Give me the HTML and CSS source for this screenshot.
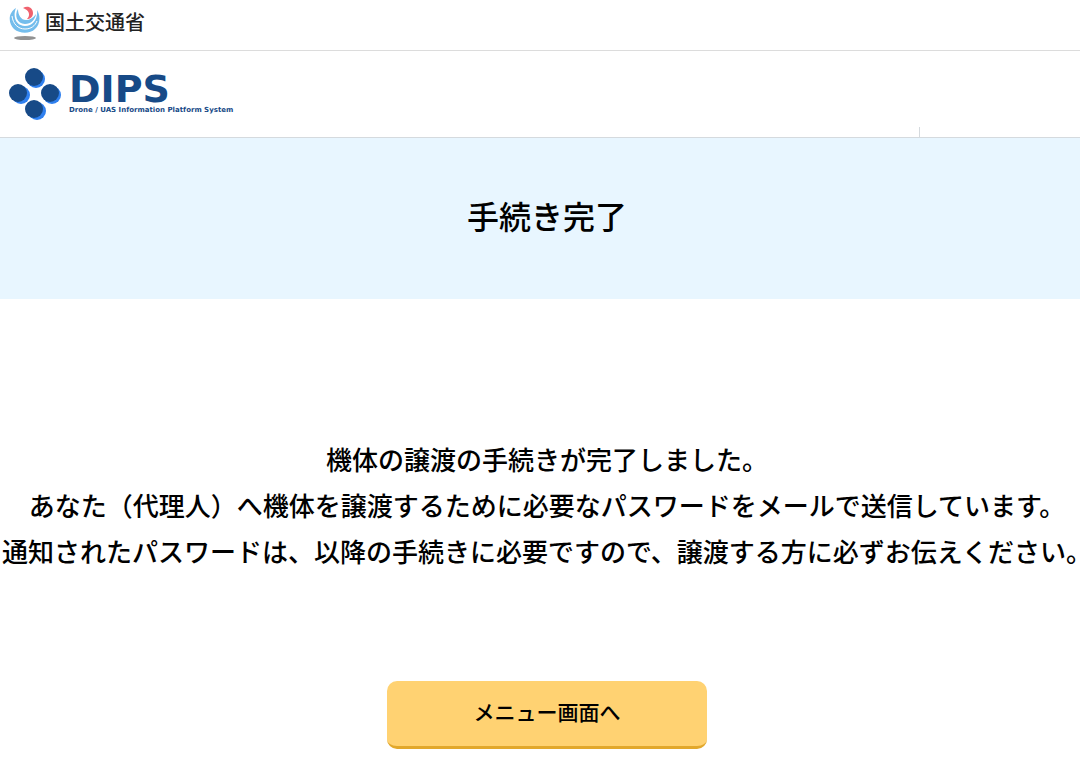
FILE: index.html
```
<!DOCTYPE html>
<html lang="ja">
<head>
<meta charset="UTF-8">
<meta name="viewport" content="width=device-width, initial-scale=1.0">
<title>手続き完了</title>
<link rel="stylesheet" href="styles.css">
</head>
<body>

<div class="ministry">
    <svg class="ministry-mark" viewBox="0 0 32 36" aria-hidden="true">
        <path fill="#74bdec" d="M7 4C-1 9-1 19 5 25c6 5 16 5 21 0 5-4 6-13 2-19 1 9-4 16-12 16C8 22 3 14 7 4z"/>
        <path fill="#74bdec" d="M9 5C5 11 8 20 16 20c6 0 10-4 11-10-3 4-6 6-10 6-5 0-8-5-8-11z"/>
        <path fill="none" stroke="#fff" stroke-width="1" d="M3 12c1 8 6 13 13 13 6 0 10-3 12-8"/>
        <path fill="#f0626e" d="M14 4c5-3 10 0 10 5 0 4-3 6-6 6 4-4 2-9-4-11z"/>
        <ellipse cx="16" cy="34" rx="11" ry="2" fill="#929292"/>
    </svg>
    <span class="ministry-name">国土交通省</span>
</div>

<header class="header">
    <div class="logo">
        <svg class="logo-mark" viewBox="0 0 52 52" aria-hidden="true">
            <g fill="#2f80ef">
                <circle cx="27" cy="11" r="9"/>
                <circle cx="12" cy="27" r="9"/>
                <circle cx="43" cy="27" r="9"/>
                <circle cx="28" cy="43" r="9"/>
            </g>
            <g fill="#174a87">
                <circle cx="25" cy="9" r="9"/>
                <circle cx="9" cy="25" r="9"/>
                <circle cx="41" cy="25" r="9"/>
                <circle cx="25" cy="41" r="9"/>
            </g>
        </svg>
        <div class="logo-text">
            <span class="logo-name">DIPS</span>
            <span class="logo-sub">Drone / UAS Information Platform System</span>
        </div>
    </div>
    <div class="header-menu"></div>
</header>

<div class="title-area">
    <h1>手続き完了</h1>
</div>

<main class="content">
    <p class="message">
        機体の譲渡の手続きが完了しました。<br>
        あなた（代理人）へ機体を譲渡するために必要なパスワードをメールで送信しています。<br>
        通知されたパスワードは、以降の手続きに必要ですので、譲渡する方に必ずお伝えください。
    </p>
    <button type="button" class="menu-button">メニュー画面へ</button>
</main>

</body>
</html>
```

FILE: styles.css
```
* {
    box-sizing: border-box;
}

body {
    margin: 0;
    overflow-x: hidden;
    font-family: "Noto Sans CJK JP", sans-serif;
    font-weight: 500;
    color: #000;
    background-color: #fff;
}

.ministry {
    display: flex;
    align-items: center;
    gap: 4px;
    height: 51px;
    padding: 0 9px 6px;
    border-bottom: 1px solid #dcdcdc;
}

.ministry-mark {
    width: 32px;
    height: 36px;
}

.ministry-name {
    font-size: 20px;
    line-height: 24px;
    color: #222;
}

.header {
    display: flex;
    justify-content: space-between;
    align-items: flex-end;
    height: 87px;
    border-bottom: 1px solid #d5dade;
}

.logo {
    display: flex;
    align-items: center;
    gap: 8px;
    padding: 0 9px 17px;
}

.logo-mark {
    width: 52px;
    height: 52px;
}

.logo-text {
    display: flex;
    flex-direction: column;
    font-family: "DejaVu Sans", sans-serif;
    font-weight: bold;
    color: #174a87;
}

.logo-name {
    font-size: 38px;
    line-height: 32px;
}

.logo-sub {
    font-size: 7px;
    line-height: 10px;
    white-space: nowrap;
}

.header-menu {
    width: 161px;
    height: 10px;
    border-left: 1px solid #d5dade;
}

.title-area {
    padding: 53px 0 60px 14px;
    background-color: #e8f6ff;
    text-align: center;
}

h1 {
    margin: 0;
    font-size: 32px;
    line-height: 48px;
    font-weight: 500;
}

.content {
    display: flex;
    flex-direction: column;
    align-items: center;
    padding: 137px 0 14px 14px;
}

.message {
    margin: 0 0 107px;
    font-size: 26px;
    line-height: 46px;
    text-align: center;
    white-space: nowrap;
}

.menu-button {
    width: 320px;
    height: 68px;
    padding: 0 0 6px;
    border: none;
    border-bottom: 3px solid #e2a82c;
    border-radius: 10px;
    background-color: #ffd272;
    font-family: inherit;
    font-size: 21px;
    font-weight: 500;
    color: #000;
    cursor: pointer;
}
```
